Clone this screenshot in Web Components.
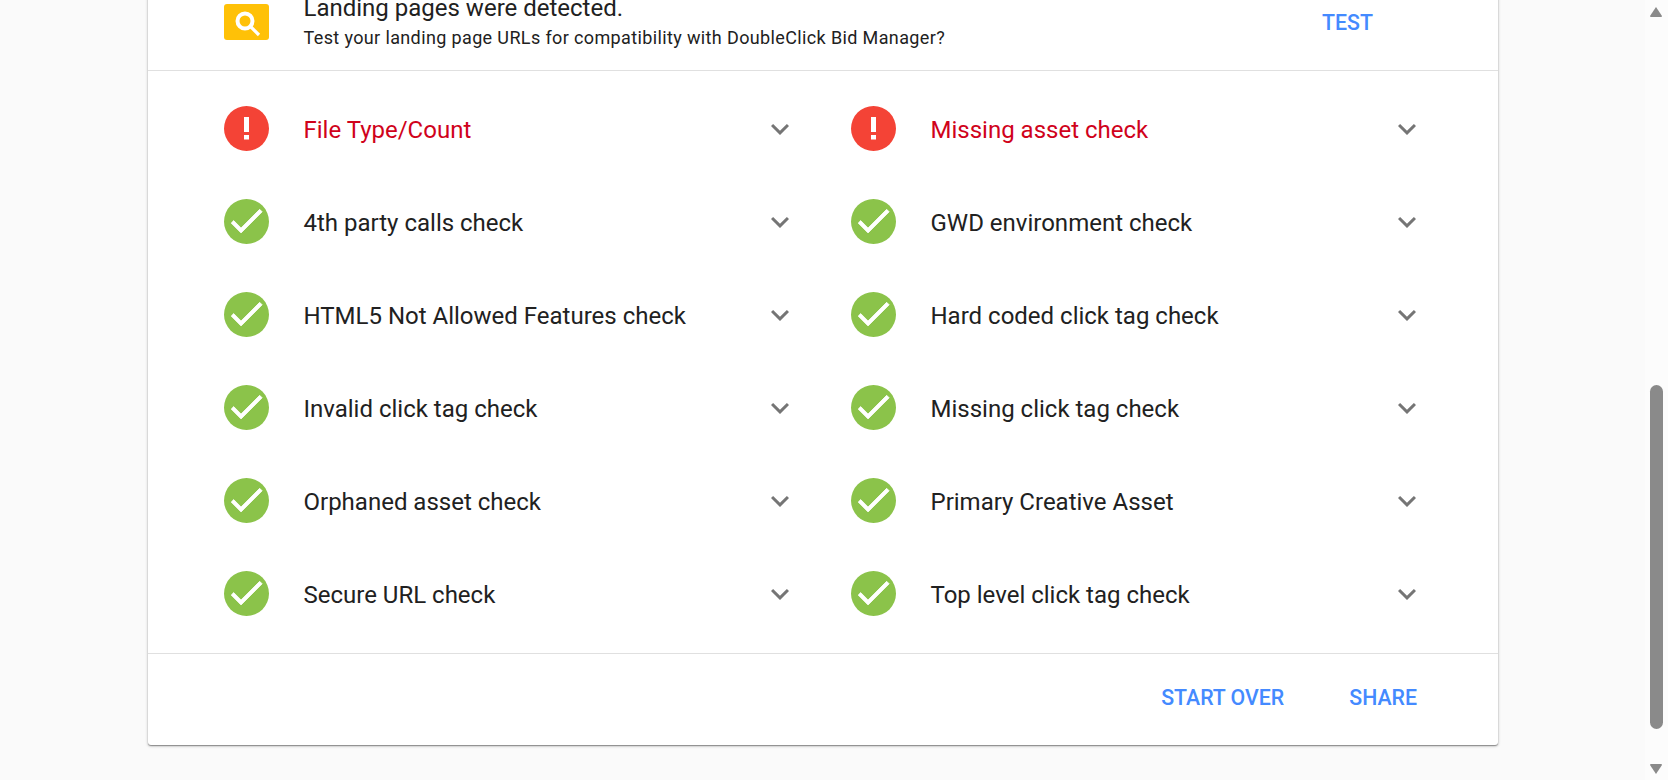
<!DOCTYPE html>
<html>
<head>
<meta charset="utf-8">
<title>HTML5 validator</title>
<style>
  html, body { margin: 0; height: 100%; overflow: hidden; background: #fafafa; }
  body { font-family: Roboto, Arial, sans-serif; }
</style>
</head>
<body>
<app-shell>
  <audit-card>
    <audit-banner slot="banner" action="TEST">
      <span slot="title">Landing pages were detected.</span>
      <span slot="sub">Test your landing page URLs for compatibility with DoubleClick Bid Manager?</span>
    </audit-banner>
    <audit-row status="error">File Type/Count</audit-row>
    <audit-row status="error">Missing asset check</audit-row>
    <audit-row>4th party calls check</audit-row>
    <audit-row>GWD environment check</audit-row>
    <audit-row>HTML5 Not Allowed Features check</audit-row>
    <audit-row>Hard coded click tag check</audit-row>
    <audit-row>Invalid click tag check</audit-row>
    <audit-row>Missing click tag check</audit-row>
    <audit-row>Orphaned asset check</audit-row>
    <audit-row>Primary Creative Asset</audit-row>
    <audit-row>Secure URL check</audit-row>
    <audit-row>Top level click tag check</audit-row>
    <text-button slot="footer">START OVER</text-button>
    <text-button slot="footer">SHARE</text-button>
  </audit-card>
</app-shell>

<script>
class AppShell extends HTMLElement {
  constructor() {
    super();
    this.attachShadow({ mode: 'open' });
    this.shadowRoot.innerHTML = `
      <style>
        :host { display: flex; height: 780px; width: 1668px; overflow: hidden; }
        .main { flex: 1; min-width: 0; padding-left: 148px; overflow: hidden; }
        .bar {
          flex: none; width: 23px; box-sizing: border-box; padding-left: 4px;
          display: flex; flex-direction: column; background: #fcfcfc;
        }
        .arrow { flex: none; height: 24px; display: flex; align-items: center; }
        .arrow.down { height: 22px; }
        .arrow svg { display: block; }
        .space { height: 361px; flex: none; }
        .thumb { height: 344px; width: 13px; margin-left: 1px; flex: none; background: #8a8a8a; border-radius: 6.5px; }
        .rest { flex: 1; }
      </style>
      <div class="main"><slot></slot></div>
      <div class="bar">
        <div class="arrow"><svg width="14" height="12" viewBox="0 0 14 12"><path d="M7 1 L13 10 Q13 11 12 11 L2 11 Q1 11 1 10 Z" fill="#8a8a8a"/></svg></div>
        <div class="space"></div><div class="thumb"></div><div class="rest"></div>
        <div class="arrow down"><svg width="14" height="12" viewBox="0 0 14 12"><path d="M7 11 L13 2 Q13 1 12 1 L2 1 Q1 1 1 2 Z" fill="#8a8a8a"/></svg></div>
      </div>`;
  }
}

class AuditCard extends HTMLElement {
  constructor() {
    super();
    this.attachShadow({ mode: 'open' });
    this.shadowRoot.innerHTML = `
      <style>
        :host {
          display: block; width: 1350px; margin-top: -30px; background: #fff;
          border-radius: 3px; box-shadow: 0 1px 3px rgba(0,0,0,.3), 0 1px 1px rgba(0,0,0,.3);
        }
        .list {
          display: grid; grid-template-columns: 574px 574px; column-gap: 53px;
          padding: 12px 73px 12px 76px; border-bottom: 1px solid #e0e0e0;
        }
        .foot {
          display: flex; justify-content: flex-end; align-items: center; gap: 65px;
          height: 91px; box-sizing: border-box; padding: 0 81px 4px 0;
        }
      </style>
      <slot name="banner"></slot>
      <div class="list"><slot></slot></div>
      <div class="foot"><slot name="footer"></slot></div>`;
  }
}

class AuditBanner extends HTMLElement {
  constructor() {
    super();
    this.attachShadow({ mode: 'open' });
    this.shadowRoot.innerHTML = `
      <style>
        :host {
          display: flex; align-items: center; height: 101px; box-sizing: border-box;
          padding: 4px 125px 0 76px; border-bottom: 1px solid #e0e0e0;
        }
        svg { flex: none; display: block; margin-right: 34.5px; }
        .text { flex: 1; min-width: 0; padding-top: 2px; color: #212121; }
        .title { font-size: 24px; line-height: 30px; }
        .sub { font-size: 18px; line-height: 30px; letter-spacing: .37px; }
      </style>
      <svg width="45" height="36" viewBox="0 0 45 36">
        <rect width="45" height="36" rx="3" fill="#ffc107"/>
        <circle cx="21" cy="17" r="7.5" fill="none" stroke="#fff" stroke-width="4"/>
        <path d="M26.5 22.5 L35 31" stroke="#fff" stroke-width="3.2" fill="none"/>
      </svg>
      <div class="text">
        <div class="title"><slot name="title"></slot></div>
        <div class="sub"><slot name="sub"></slot></div>
      </div>
      <text-button></text-button>`;
    this.shadowRoot.querySelector('text-button').textContent = this.getAttribute('action');
  }
}

class AuditRow extends HTMLElement {
  constructor() {
    super();
    this.attachShadow({ mode: 'open' });
    const error = this.getAttribute('status') === 'error';
    const icon = error
      ? `<circle cx="22.5" cy="22.5" r="22.5" fill="#f44336"/>
         <rect x="20" y="11" width="5" height="15" fill="#fff"/>
         <rect x="20" y="29" width="5" height="4.5" fill="#fff"/>`
      : `<circle cx="22.5" cy="22.5" r="22.5" fill="#8bc34a"/>
         <path transform="translate(1.2 .5) scale(1.76)" d="M9 16.17L4.83 12l-1.42 1.41L9 19 21 7l-1.41-1.41z" fill="#fff" stroke="#fff" stroke-width=".45"/>`;
    this.shadowRoot.innerHTML = `
      <style>
        :host {
          display: flex; align-items: center; height: 93px;
          font-size: 24px; color: ${error ? '#d0021b' : '#212121'};
        }
        .icon { flex: none; display: block; margin: 0 34.5px 2px 0; }
        .label { flex: 1; min-width: 0; white-space: nowrap; }
        .more { flex: none; display: block; margin-bottom: 2px; }
      </style>
      <svg class="icon" width="45" height="45" viewBox="0 0 45 45">${icon}</svg>
      <span class="label"><slot></slot></span>
      <svg class="more" width="36" height="36" viewBox="0 0 24 24"><path d="M16.59 8.59L12 13.17 7.41 8.59 6 10l6 6 6-6z" fill="#757575"/></svg>`;
  }
}

class TextButton extends HTMLElement {
  constructor() {
    super();
    this.attachShadow({ mode: 'open' });
    this.shadowRoot.innerHTML = `
      <style>
        :host {
          display: inline-block; font-size: 21.3px; font-weight: 500; color: #448aff;
          white-space: nowrap; cursor: pointer;
        }
      </style>
      <slot></slot>`;
  }
}

customElements.define('text-button', TextButton);
customElements.define('audit-row', AuditRow);
customElements.define('audit-banner', AuditBanner);
customElements.define('audit-card', AuditCard);
customElements.define('app-shell', AppShell);
</script>
</body>
</html>
